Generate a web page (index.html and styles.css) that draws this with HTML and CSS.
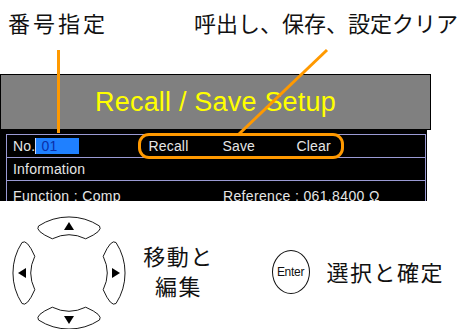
FILE: index.html
```html
<!DOCTYPE html>
<html lang="ja">
<head>
<meta charset="utf-8">
<title>Recall / Save Setup</title>
<link rel="stylesheet" href="styles.css">
</head>
<body>
<div class="page">
  <div class="labels">
    <span class="label label-no">番号指定</span>
    <span class="label label-act">呼出し、保存、設定クリア</span>
  </div>

  <div class="screen">
    <div class="screen-head">Recall / Save Setup</div>
    <div class="screen-body">
      <div class="table">
        <div class="row row-no">
          <span class="cell-label">No.</span><span class="num-field">01</span>
          <div class="actions">
            <span class="act">Recall</span><span class="act">Save</span><span class="act act-last">Clear</span>
          </div>
        </div>
        <div class="row">Information</div>
        <div class="row row-info">
          <span class="col-first">Function : Comp</span><span>Reference : 061.8400 Ω</span>
        </div>
      </div>
    </div>
  </div>

  <div class="controls">
    <svg class="dpad" width="138" height="128" viewBox="0 0 138 128">
      <defs>
        <g id="dbtn">
          <path class="dbtn-body" d="M38.5 25 A56 56 0 0 1 99.5 25 Q103.5 30 85.7 37.8 A38 38 0 0 0 52.3 37.8 Q34.5 30 38.5 25 Z"/>
          <path class="dbtn-arrow" d="M69 21 L74 29 L64 29 Z"/>
        </g>
      </defs>
      <use href="#dbtn"/>
      <use href="#dbtn" transform="rotate(90 69 72)"/>
      <use href="#dbtn" transform="rotate(180 69 72)"/>
      <use href="#dbtn" transform="rotate(-90 69 72)"/>
    </svg>
    <div class="caption caption-move">移動と<br>編集</div>
    <div class="enter-key">Enter</div>
    <div class="caption caption-enter">選択と確定</div>
  </div>

  <svg class="callouts" width="458" height="329" viewBox="0 0 458 329">
    <line x1="58.5" y1="50" x2="58.5" y2="133"/>
    <line x1="327" y1="50" x2="239" y2="134"/>
  </svg>
</div>
</body>
</html>
```

FILE: styles.css
```css
body {
  margin: 0;
  background: #fff;
  font-family: "Liberation Sans", Arial, sans-serif;
}

.page {
  position: relative;
  width: 458px;
  height: 329px;
  overflow: hidden;
}

/* top annotation labels */
.labels {
  display: flex;
  height: 74px;
  box-sizing: border-box;
  padding: 11px 0 0 8px;
  font-family: "Noto Sans CJK JP", sans-serif;
  font-size: 22px;
  line-height: 22px;
  color: #111;
  white-space: nowrap;
}

.label-no {
  letter-spacing: 3px;
}

.label-act {
  margin-left: 86px;
}

/* instrument screen */
.screen {
  width: 431px;
}

.screen-head {
  box-sizing: border-box;
  height: 56px;
  border: 1px solid #000;
  background: #808080;
  color: #ffff00;
  font-size: 27px;
  line-height: 54px;
  letter-spacing: 0.2px;
  text-align: center;
}

.screen-body {
  box-sizing: border-box;
  width: 427px;
  height: 71px;
  padding: 4px 1px 0 6px;
  background: #000;
  overflow: hidden;
}

.table {
  border: 1px solid #9a9ad4;
  border-bottom: none;
}

.row {
  display: flex;
  align-items: center;
  height: 22px;
  padding-left: 6px;
  border-bottom: 1px solid #9a9ad4;
  color: #e6e6e6;
  font-size: 14px;
  letter-spacing: 0.2px;
  white-space: nowrap;
}

.row-info {
  align-items: flex-start;
  height: 30px;
  padding-top: 7px;
  border-bottom: none;
  letter-spacing: 0.35px;
}

.num-field {
  box-sizing: border-box;
  width: 44px;
  height: 16px;
  padding-left: 5px;
  border-left: 1px solid #c8d8ff;
  background: #1f80ff;
  color: #0b2fa8;
  line-height: 16px;
}

.actions {
  display: flex;
  align-items: center;
  box-sizing: border-box;
  height: 26px;
  margin: -2px 0 -2px 59px;
  padding: 0 10px 0 7px;
  border: 3px solid #ff9900;
  border-radius: 11px;
}

.act {
  width: 74px;
}

.act-last {
  width: auto;
}

.col-first {
  width: 210px;
}

/* bottom controls */
.controls {
  display: flex;
  align-items: flex-start;
  height: 128px;
}

.dpad {
  display: block;
  flex: none;
}

.dbtn-body {
  fill: #fff;
  stroke: #1a1a1a;
  stroke-width: 1;
}

.dbtn-arrow {
  fill: #000;
}

.caption {
  font-family: "Noto Sans CJK JP", sans-serif;
  font-size: 22px;
  line-height: 30px;
  color: #111;
  letter-spacing: 1.5px;
  white-space: nowrap;
}

.caption-move {
  width: 72px;
  margin: 39px 0 0 3px;
  padding-left: 1.5px;
  text-align: center;
}

.enter-key {
  display: flex;
  align-items: center;
  justify-content: center;
  box-sizing: border-box;
  width: 38px;
  height: 44px;
  margin: 49px 0 0 57px;
  border: 1px solid #111;
  border-radius: 50%;
  font-size: 12px;
  letter-spacing: -0.3px;
  color: #111;
}

.caption-enter {
  margin: 55px 0 0 17px;
}

/* orange annotation leader lines */
.callouts {
  position: absolute;
  left: 0;
  top: 0;
  pointer-events: none;
}

.callouts line {
  stroke: #ff9900;
  stroke-width: 3;
}
```
